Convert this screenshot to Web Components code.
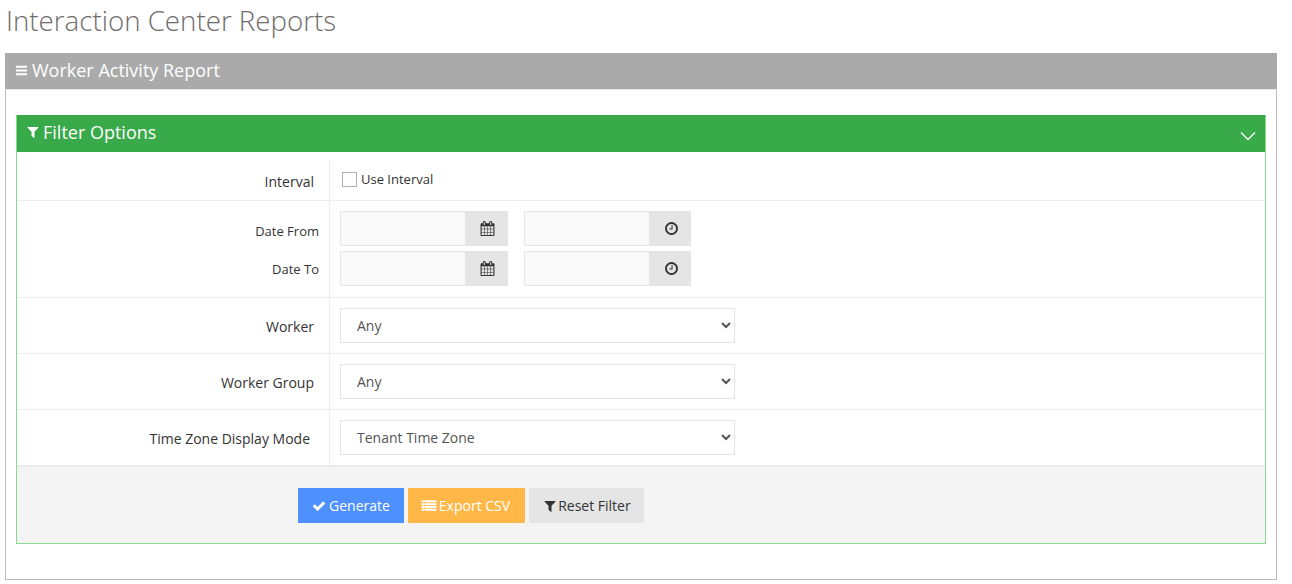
<!DOCTYPE html>
<html lang="en">

<head>
  <meta charset="UTF-8">
  <title>Interaction Center Reports</title>
  <style>
    html,
    body {
      margin: 0;
      background: #fff;
      font-family: "Open Sans", "Liberation Sans", sans-serif;
      color: #333;
    }

    body {
      padding: 0 15px 4px 5px;
    }

    h1 {
      margin: 0;
      height: 53px;
      padding: 0 0 0 1px;
      font-size: 27.7px;
      line-height: 41px;
      font-weight: 300;
      color: #706c6c;
    }
  </style>
</head>

<body>
  <h1>Interaction Center Reports</h1>
  <report-panel heading="Worker Activity Report">
    <filter-panel heading="Filter Options">
      <filter-row label="Interval" height="48" pad="15" first>
        <check-field>Use Interval</check-field>
      </filter-row>
      <date-row></date-row>
      <filter-row label="Worker" height="55" pad="15">
        <select-field value="Any"></select-field>
      </filter-row>
      <filter-row label="Worker Group" height="55" pad="15">
        <select-field value="Any"></select-field>
      </filter-row>
      <filter-row label="Time Zone Display Mode" height="55" pad="19" last>
        <select-field value="Tenant Time Zone"></select-field>
      </filter-row>
      <action-button slot="actions" kind="primary" icon="check">Generate</action-button>
      <action-button slot="actions" kind="warning" icon="list">Export CSV</action-button>
      <action-button slot="actions" kind="plain" icon="filter">Reset Filter</action-button>
    </filter-panel>
  </report-panel>

  <script>
    // font awesome 4 shapes, 1792 grid
    const ICONS = {
      bars: 'M1664 1344v128q0 26-19 45t-45 19h-1408q-26 0-45-19t-19-45v-128q0-26 19-45t45-19h1408q26 0 45 19t19 45zm0-512v128q0 26-19 45t-45 19h-1408q-26 0-45-19t-19-45v-128q0-26 19-45t45-19h1408q26 0 45 19t19 45zm0-512v128q0 26-19 45t-45 19h-1408q-26 0-45-19t-19-45v-128q0-26 19-45t45-19h1408q26 0 45 19t19 45z',
      filter: 'M1595 295q17 41-14 70l-493 493v742q0 42-39 59-13 5-25 5-27 0-45-19l-256-256q-19-19-19-45v-486l-493-493q-31-29-14-70 17-39 59-39h1280q42 0 59 39z',
      check: 'M1671 566q0 40-28 68l-724 724-136 136q-28 28-68 28t-68-28l-136-136-362-362q-28-28-28-68t28-68l136-136q28-28 68-28t68 28l294 295 656-657q28-28 68-28t68 28l136 136q28 28 28 68z',
      list: 'M64 256h356v224h-356zM480 256h1248v224h-1248zM64 576h356v224h-356zM480 576h1248v224h-1248zM64 896h356v224h-356zM480 896h1248v224h-1248zM64 1216h356v224h-356zM480 1216h1248v224h-1248z',
      calendar: 'M192 1664h288v-288h-288v288zm352 0h320v-288h-320v288zm-352-352h288v-320h-288v320zm352 0h320v-320h-320v320zm-352-384h288v-288h-288v288zm736 736h320v-288h-320v288zm-384-736h320v-288h-320v288zm768 736h288v-288h-288v288zm-384-352h320v-320h-320v320zm-352-864v-288q0-13-9.500-22.500t-22.500-9.500h-64q-13 0-22.500 9.500t-9.500 22.500v288q0 13 9.500 22.500t22.500 9.500h64q13 0 22.500-9.500t9.500-22.500zm736 864h288v-320h-288v320zm-384-384h320v-288h-320v288zm384 0h288v-288h-288v288zm32-480v-288q0-13-9.500-22.500t-22.500-9.500h-64q-13 0-22.500 9.500t-9.500 22.500v288q0 13 9.500 22.500t22.500 9.500h64q13 0 22.500-9.500t9.500-22.500zm384-64v1280q0 52-38 90t-90 38h-1408q-52 0-90-38t-38-90v-1280q0-52 38-90t90-38h128v-96q0-66 47-113t113-47h64q66 0 113 47t47 113v96h384v-96q0-66 47-113t113-47h64q66 0 113 47t47 113v96h128q52 0 90 38t38 90z',
      clock: 'M1024 544v448q0 14-9 23t-23 9h-320q-14 0-23-9t-9-23v-64q0-14 9-23t23-9h224v-352q0-14 9-23t23-9h64q14 0 23 9t9 23zm416 352q0-148-73-273t-198-198-273-73-273 73-198 198-73 273 73 273 198 198 273 73 273-73 198-198 73-273zm224 0q0 209-103 385.500t-279.500 279.500-385.500 103-385.500-103-279.500-279.500-103-385.500 103-385.500 279.500-279.500 385.500-103 385.500 103 279.500 279.500 103 385.500z'
    };

    class FaIcon extends HTMLElement {
      constructor() {
        super();
        this.attachShadow({ mode: 'open' });
        const size = this.getAttribute('size') || 14;
        this.shadowRoot.innerHTML = `
          <style>
            :host { display: inline-flex; flex: none; }
            svg { display: block; fill: currentColor; }
          </style>
          <svg width="${size}" height="${size}" viewBox="0 0 1792 1792"><path d="${ICONS[this.getAttribute('name')]}"/></svg>`;
      }
    }

    class ReportPanel extends HTMLElement {
      constructor() {
        super();
        this.attachShadow({ mode: 'open' });
        this.shadowRoot.innerHTML = `
          <style>
            :host { display: block; border: 1px solid #bbb; border-top: 0; }
            header {
              display: flex; align-items: center; gap: 4px;
              height: 34px; margin: 0 -1px; padding: 0 0 2px 10px;
              background: #aaa; color: #fff; font-size: 18px;
              border-bottom: 1px solid #e8e8e8;
            }
            .body { padding: 25px 10px 35px 10px; }
          </style>
          <header><fa-icon name="bars" size="13"></fa-icon><span>${this.getAttribute('heading')}</span></header>
          <div class="body"><slot></slot></div>`;
      }
    }

    class FilterPanel extends HTMLElement {
      constructor() {
        super();
        this.attachShadow({ mode: 'open' });
        this.shadowRoot.innerHTML = `
          <style>
            :host { display: block; border: 1px solid #84dc90; border-top: 0; }
            header {
              display: flex; align-items: center; gap: 3px;
              height: 37px; box-sizing: border-box; padding: 0 9px 4px 9px;
              background: #38aa49; color: #fff; font-size: 18px;
            }
            header span { flex: 1; }
            .chev { display: block; margin-top: 9px; }
            footer {
              display: flex; gap: 4px;
              height: 78px; box-sizing: border-box; padding: 21px 0 0 281px;
              background: #f4f4f4; border-top: 2px solid #ebebeb;
            }
          </style>
          <header>
            <fa-icon name="filter" size="14"></fa-icon>
            <span>${this.getAttribute('heading')}</span>
            <svg class="chev" width="16" height="10" viewBox="0 0 16 10" fill="none" stroke="#fff" stroke-width="1.4"><path d="M1 1.500l7 7 7-7"/></svg>
          </header>
          <slot></slot>
          <footer><slot name="actions"></slot></footer>`;
      }
    }

    class FilterRow extends HTMLElement {
      constructor() {
        super();
        this.attachShadow({ mode: 'open' });
        this.shadowRoot.innerHTML = `
          <style>
            :host { display: grid; grid-template-columns: 312px 1fr; height: ${this.getAttribute('height')}px; border-bottom: 1px solid #ededed; font-size: 14px; }
            :host([last]) { border-bottom: 0; }
            .label { padding: 19px ${this.getAttribute('pad')}px 0 0; text-align: right; color: #333; }
            .field { padding: 10px 0 0 10px; border-left: 1px solid #ededed; }
            :host([first]) .label { padding-top: 20px; }
            :host([first]) .field { margin-top: 8px; padding-top: 12px; }
          </style>
          <div class="label">${this.getAttribute('label')}</div>
          <div class="field"><slot></slot></div>`;
      }
    }

    class CheckField extends HTMLElement {
      constructor() {
        super();
        this.attachShadow({ mode: 'open' });
        this.shadowRoot.innerHTML = `
          <style>
            :host { display: inline-flex; align-items: center; gap: 4px; height: 15px; margin-left: 2px; font-size: 13px; color: #333; }
            input { appearance: none; width: 15px; height: 15px; margin: 0; background: #fff; border: 1px solid #b0b0b0; }
            span { padding-bottom: 2px; }
          </style>
          <input type="checkbox"><span><slot></slot></span>`;
      }
    }

    class DateField extends HTMLElement {
      constructor() {
        super();
        this.attachShadow({ mode: 'open' });
        this.shadowRoot.innerHTML = `
          <style>
            :host { display: flex; height: 35px; }
            :host([icon="clock"]) .addon { padding-left: 1px; }
            input { flex: 1; min-width: 0; box-sizing: border-box; margin: 0; border: 1px solid #e5e5e5; background: #f9f9f9; outline: 0; }
            .addon { display: flex; align-items: center; justify-content: center; width: ${this.getAttribute('addon')}px; background: #e5e5e5; color: #333; padding-bottom: 1px; box-sizing: border-box; }
          </style>
          <input type="text">
          <div class="addon"><fa-icon name="${this.getAttribute('icon')}" size="15"></fa-icon></div>`;
      }
    }

    class DateRow extends HTMLElement {
      constructor() {
        super();
        this.attachShadow({ mode: 'open' });
        const pair = `
          <date-field addon="42" icon="calendar"></date-field>
          <date-field addon="41" icon="clock"></date-field>`;
        this.shadowRoot.innerHTML = `
          <style>
            :host { display: grid; grid-template-columns: 312px 1fr; height: 96px; border-bottom: 1px solid #ededed; font-size: 13px; color: #333; }
            .labels { display: grid; grid-template-rows: 35px 35px; row-gap: 5px; padding: 10px 10px 0 0; text-align: right; }
            .labels div:first-child { line-height: 41px; }
            .labels div:last-child { line-height: 37px; }
            .fields { display: grid; grid-template-columns: 168px 167px; grid-auto-rows: 35px; column-gap: 16px; row-gap: 5px; padding: 10px 0 0 10px; border-left: 1px solid #ededed; }
          </style>
          <div class="labels"><div>Date From</div><div>Date To</div></div>
          <div class="fields">${pair}${pair}</div>`;
      }
    }

    class SelectField extends HTMLElement {
      constructor() {
        super();
        this.attachShadow({ mode: 'open' });
        this.shadowRoot.innerHTML = `
          <style>
            :host { display: block; width: 395px; height: 35px; }
            select {
              display: block; width: 100%; height: 100%; box-sizing: border-box; margin: 0;
              padding: 0 12px; background: #fff; border: 1px solid #e5e5e5; border-radius: 0;
              font: 14px "Open Sans", "Liberation Sans", sans-serif; color: #555; outline: 0;
            }
          </style>
          <select><option>${this.getAttribute('value')}</option></select>`;
      }
    }

    class ActionButton extends HTMLElement {
      constructor() {
        super();
        this.attachShadow({ mode: 'open' });
        const size = this.getAttribute('icon') == 'list' ? 16 : 14;
        this.shadowRoot.innerHTML = `
          <style>
            :host { display: inline-flex; align-items: center; gap: 3px; height: 35px; padding: 0 14px; font-size: 14px; color: #fff; box-sizing: border-box; }
            :host([kind="primary"]) { background: #4d90fe; }
            :host([kind="warning"]) { background: #ffb848; padding: 0 15px 0 13px; gap: 2px; }
            :host([kind="plain"]) { background: #e5e5e5; color: #333; padding-right: 13px; gap: 1px; }
          </style>
          <fa-icon name="${this.getAttribute('icon')}" size="${size}"></fa-icon><slot></slot>`;
      }
    }

    customElements.define('fa-icon', FaIcon);
    customElements.define('report-panel', ReportPanel);
    customElements.define('filter-panel', FilterPanel);
    customElements.define('filter-row', FilterRow);
    customElements.define('check-field', CheckField);
    customElements.define('date-field', DateField);
    customElements.define('date-row', DateRow);
    customElements.define('select-field', SelectField);
    customElements.define('action-button', ActionButton);
  </script>
</body>

</html>
